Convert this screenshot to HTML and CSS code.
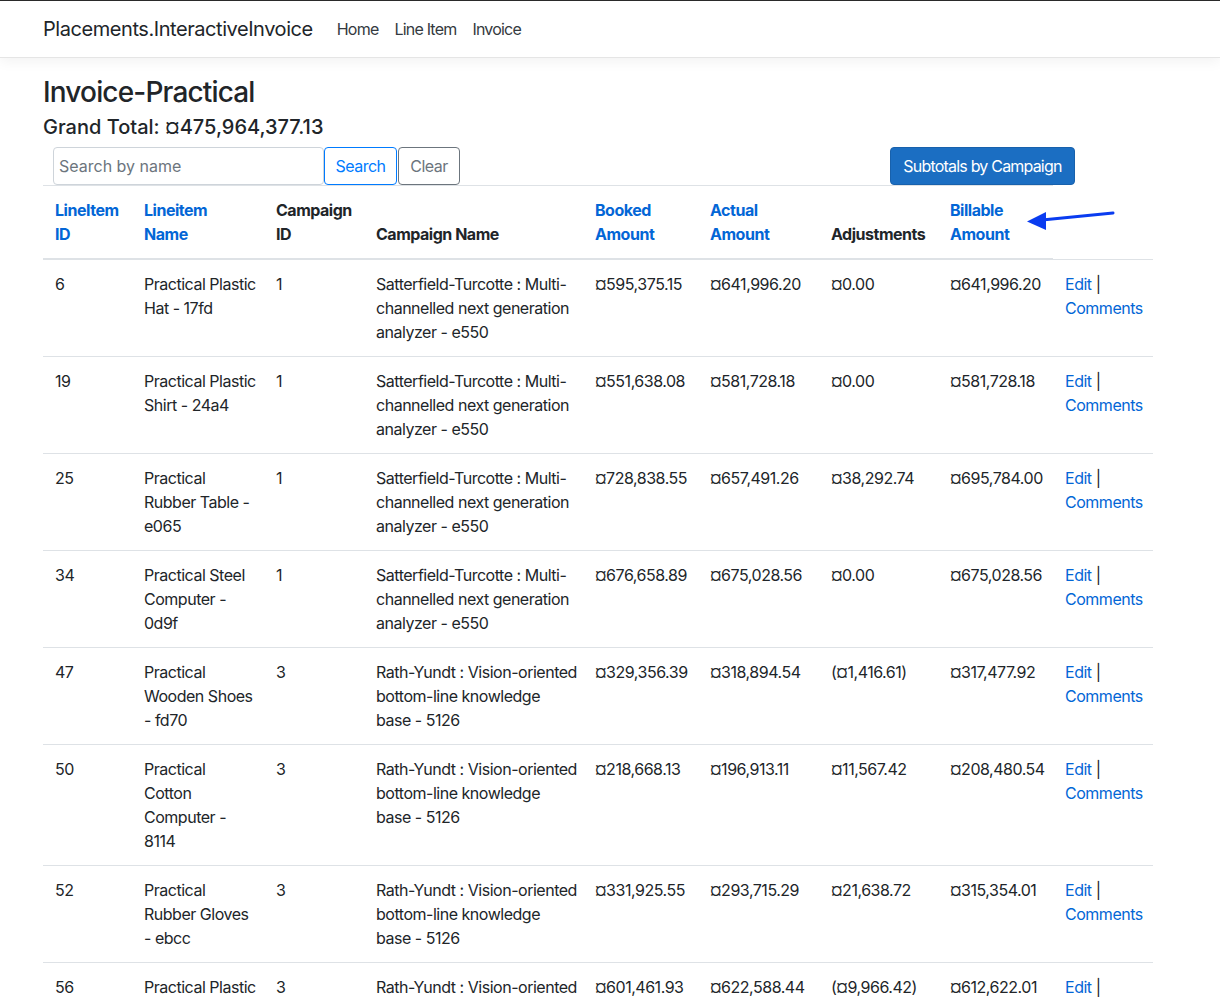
FILE: index.html
```html
<!DOCTYPE html>
<html lang="en">
<head>
<meta charset="utf-8">
<title>Invoice-Practical - Placements.InteractiveInvoice</title>
<link rel="stylesheet" href="styles.css">
</head>
<body>
<header class="navbar">
  <div class="container nav-inner">
    <a class="brand" href="#">Placements.InteractiveInvoice</a>
    <ul class="nav-links">
      <li><a href="#">Home</a></li>
      <li><a href="#">Line Item</a></li>
      <li><a href="#">Invoice</a></li>
    </ul>
  </div>
</header>
<main class="container">
  <h3 class="title">Invoice-Practical</h3>
  <h5 class="total">Grand Total: ¤475,964,377.13</h5>
  <div class="toolbar">
    <form class="search">
      <input class="search-input" type="text" placeholder="Search by name">
      <button type="button" class="btn btn-outline-primary">Search</button>
      <button type="button" class="btn btn-outline-secondary">Clear</button>
    </form>
    <button type="button" class="btn btn-primary">Subtotals by Campaign</button>
  </div>
  <table class="table">
    <colgroup>
      <col class="c1"><col class="c2"><col class="c3"><col class="c4"><col class="c5"><col class="c6"><col class="c7"><col class="c8"><col class="c9">
    </colgroup>
    <thead>
      <tr>
        <th><a href="#">LineItem ID</a></th>
        <th><a href="#">Lineitem Name</a></th>
        <th>Campaign ID</th>
        <th>Campaign Name</th>
        <th><a href="#">Booked Amount</a></th>
        <th><a href="#">Actual Amount</a></th>
        <th>Adjustments</th>
        <th><a href="#">Billable Amount</a></th>
      </tr>
    </thead>
    <tbody>
      <tr>
        <td>6</td><td class="name">Practical Plastic Hat - 17fd</td><td>1</td>
        <td class="cname">Satterfield-Turcotte : Multi-channelled next generation analyzer - e550</td>
        <td>¤595,375.15</td><td>¤641,996.20</td><td>¤0.00</td><td>¤641,996.20</td>
        <td><a href="#">Edit</a> | <a href="#">Comments</a></td>
      </tr>
      <tr>
        <td>19</td><td class="name">Practical Plastic Shirt - 24a4</td><td>1</td>
        <td class="cname">Satterfield-Turcotte : Multi-channelled next generation analyzer - e550</td>
        <td>¤551,638.08</td><td>¤581,728.18</td><td>¤0.00</td><td>¤581,728.18</td>
        <td><a href="#">Edit</a> | <a href="#">Comments</a></td>
      </tr>
      <tr>
        <td>25</td><td class="name">Practical Rubber Table - e065</td><td>1</td>
        <td class="cname">Satterfield-Turcotte : Multi-channelled next generation analyzer - e550</td>
        <td>¤728,838.55</td><td>¤657,491.26</td><td>¤38,292.74</td><td>¤695,784.00</td>
        <td><a href="#">Edit</a> | <a href="#">Comments</a></td>
      </tr>
      <tr>
        <td>34</td><td class="name">Practical Steel Computer - 0d9f</td><td>1</td>
        <td class="cname">Satterfield-Turcotte : Multi-channelled next generation analyzer - e550</td>
        <td>¤676,658.89</td><td>¤675,028.56</td><td>¤0.00</td><td>¤675,028.56</td>
        <td><a href="#">Edit</a> | <a href="#">Comments</a></td>
      </tr>
      <tr>
        <td>47</td><td class="name">Practical Wooden Shoes - fd70</td><td>3</td>
        <td class="cname">Rath-Yundt : Vision-oriented bottom-line knowledge base - 5126</td>
        <td>¤329,356.39</td><td>¤318,894.54</td><td>(¤1,416.61)</td><td>¤317,477.92</td>
        <td><a href="#">Edit</a> | <a href="#">Comments</a></td>
      </tr>
      <tr>
        <td>50</td><td class="name">Practical Cotton Computer - 8114</td><td>3</td>
        <td class="cname">Rath-Yundt : Vision-oriented bottom-line knowledge base - 5126</td>
        <td>¤218,668.13</td><td>¤196,913.11</td><td>¤11,567.42</td><td>¤208,480.54</td>
        <td><a href="#">Edit</a> | <a href="#">Comments</a></td>
      </tr>
      <tr>
        <td>52</td><td class="name">Practical Rubber Gloves - ebcc</td><td>3</td>
        <td class="cname">Rath-Yundt : Vision-oriented bottom-line knowledge base - 5126</td>
        <td>¤331,925.55</td><td>¤293,715.29</td><td>¤21,638.72</td><td>¤315,354.01</td>
        <td><a href="#">Edit</a> | <a href="#">Comments</a></td>
      </tr>
      <tr>
        <td>56</td><td class="name">Practical Plastic Pizza - 3c2a</td><td>3</td>
        <td class="cname">Rath-Yundt : Vision-oriented bottom-line knowledge base - 5126</td>
        <td>¤601,461.93</td><td>¤622,588.44</td><td>(¤9,966.42)</td><td>¤612,622.01</td>
        <td><a href="#">Edit</a> | <a href="#">Comments</a></td>
      </tr>
    </tbody>
  </table>
</main>
<svg class="annotation" width="100" height="30" viewBox="0 0 100 30" aria-hidden="true">
  <line x1="96" y1="6" x2="25" y2="13" stroke="#0a3cf0" stroke-width="3" stroke-linecap="round"/>
  <polygon points="10,14.5 29,5 29,23" fill="#0a3cf0"/>
</svg>
</body>
</html>
```
FILE: styles.css
```css
html, body {
  margin: 0;
  padding: 0;
}
body {
  font-family: Inter, "Liberation Sans", Arial, sans-serif;
  font-size: 16px;
  line-height: 24px;
  letter-spacing: -0.03em;
  color: #212529;
  background: #fff;
  border-top: 1px solid #2a2a2a;
  position: relative;
}
a {
  color: #0366d6;
  text-decoration: none;
}
.container {
  width: 1110px;
  margin-left: 43px;
}
.navbar {
  background: #fff;
  border-bottom: 1px solid #e5e5e5;
  box-shadow: 0 4px 12px rgba(0, 0, 0, 0.05);
  padding: 8px 0;
  margin-bottom: 16px;
}
.nav-inner {
  display: flex;
  align-items: center;
}
.brand {
  color: #212529;
  font-size: 20px;
  line-height: 30px;
  padding: 5px 0;
  margin-right: 16px;
  letter-spacing: -0.022em;
}
.nav-links {
  display: flex;
  list-style: none;
  margin: 0;
  padding: 0;
}
.nav-links a {
  display: block;
  padding: 8px;
  color: #343a40;
  font-size: 16px;
  line-height: 24px;
  letter-spacing: -0.05em;
}
.title {
  font-size: 28px;
  font-weight: 500;
  line-height: 36px;
  margin: 0 0 5px;
  letter-spacing: -0.03em;
}
.total {
  font-size: 20px;
  font-weight: 500;
  line-height: 24px;
  margin: 0 0 8px;
  letter-spacing: 0;
}
.toolbar {
  display: flex;
  align-items: flex-start;
  padding-left: 10px;
  width: 1022px;
  justify-content: space-between;
}
.search {
  display: flex;
  margin: 0;
}
.search-input {
  box-sizing: border-box;
  width: 271px;
  height: 38px;
  padding: 6px 5px;
  font: inherit;
  font-size: 16px;
  color: #495057;
  border: 1px solid #ced4da;
  border-radius: 4px;
}
.search-input::placeholder {
  color: #6c757d;
}
.btn {
  box-sizing: border-box;
  height: 38px;
  padding: 6px 0;
  font: inherit;
  font-size: 16px;
  line-height: 24px;
  letter-spacing: -0.03em;
  text-align: center;
  white-space: nowrap;
  border: 1px solid transparent;
  border-radius: 4px;
  background: #fff;
  cursor: pointer;
}
.btn-outline-primary {
  color: #007bff;
  border-color: #007bff;
  width: 73px;
}
.btn-outline-secondary {
  color: #6c757d;
  border-color: #6c757d;
  width: 62px;
  margin-left: 1px;
}
.btn-primary {
  color: #fff;
  background: #1b6ec2;
  border-color: #1861ac;
  width: 185px;
  letter-spacing: -0.05em;
}
.table {
  border-collapse: collapse;
  table-layout: fixed;
  width: 1110px;
}
.c1 { width: 89px; }
.c2 { width: 132px; }
.c3 { width: 100px; }
.c4 { width: 219px; }
.c5 { width: 115px; }
.c6 { width: 121px; }
.c7 { width: 119px; }
.c8 { width: 115px; }
.c9 { width: 100px; }
.table th,
.table td {
  padding: 12px;
  text-align: left;
  vertical-align: top;
  border-top: 1px solid #dee2e6;
}
.table th {
  font-weight: 700;
  vertical-align: bottom;
  border-bottom: 2px solid #dee2e6;
}
.table td.name {
  padding-right: 7.7px;
}
.table td.cname {
  padding-right: 5.1px;
}
.annotation {
  position: absolute;
  left: 1017px;
  top: 206px;
}
```
